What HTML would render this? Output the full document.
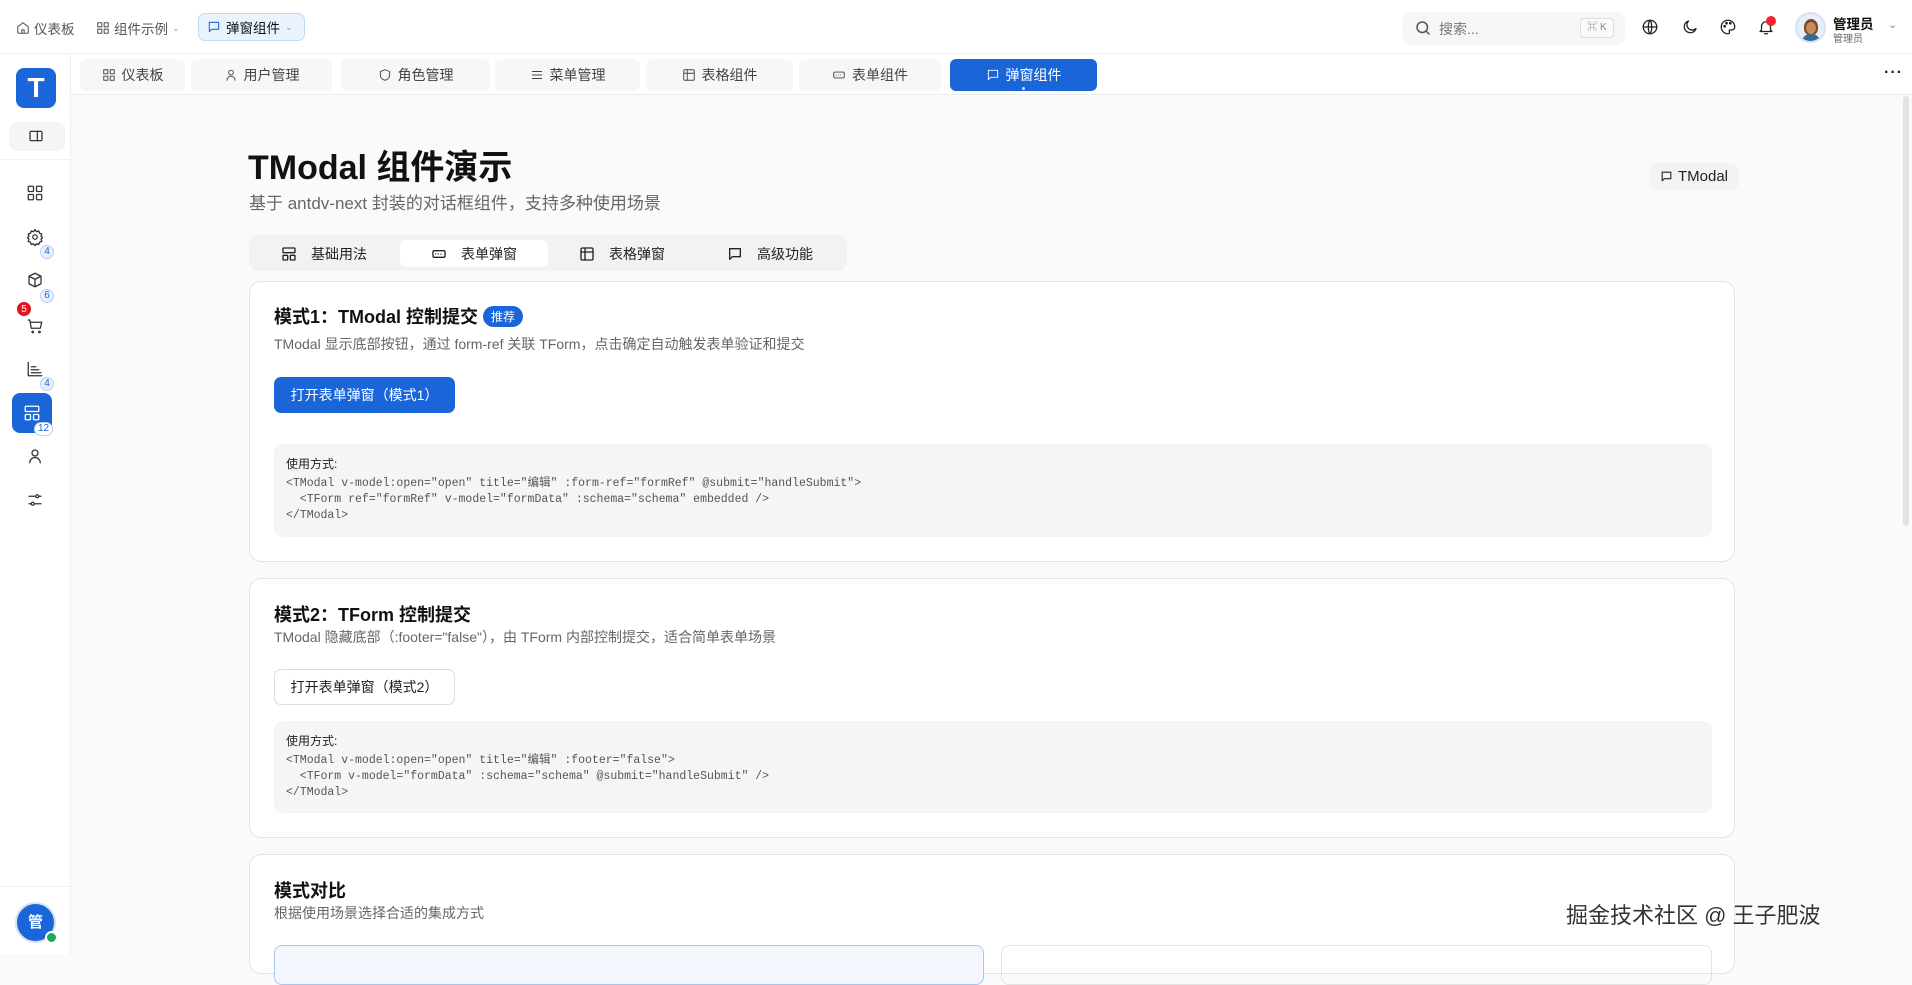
<!DOCTYPE html>
<html><head><meta charset="utf-8"><style>
*{box-sizing:border-box;margin:0;padding:0}
body{width:1912px;height:954px;overflow:hidden;background:#fafafa;font-family:"Liberation Sans","Noto Sans CJK SC",sans-serif;color:#1f1f1f;position:relative}
.a{position:absolute}
svg{fill:none;stroke:currentColor;stroke-width:2;stroke-linecap:round;stroke-linejoin:round}
.hdr{left:0;top:0;width:1912px;height:54px;background:#fff;border-bottom:1px solid #eee}
.side{left:0;top:54px;width:71px;height:900px;background:#fff;border-right:1px solid #eee}
.tabs{left:71px;top:54px;width:1841px;height:41px;background:#fff;border-bottom:1px solid #eee}
.tab{position:absolute;top:59px;height:32px;background:#f7f7f7;border-radius:6px;font-size:14px;color:#444;display:flex;align-items:center;justify-content:center;gap:6px}
.tab svg{width:14px;height:14px;stroke-width:1.6}
.card{position:absolute;left:249px;width:1486px;background:#fff;border:1px solid #e3e3e3;border-radius:12px}
.ct{position:absolute;left:24px;font-size:18px;font-weight:bold;color:#111}
.cd{position:absolute;left:24px;font-size:14px;color:#666}
.code{position:absolute;left:24px;width:1438px;background:#f5f5f5;border-radius:8px;padding:12px 12px;font-size:11.5px;color:#555;font-family:"Liberation Mono","Noto Sans CJK SC",monospace;line-height:16px;white-space:pre}
.code b{font-family:"Liberation Sans","Noto Sans CJK SC",sans-serif;font-weight:normal;color:#222;font-size:12px;display:block;margin-bottom:4px}
.si{position:absolute;left:26px;width:18px;height:18px;color:#333}
.si svg{width:18px;height:18px;stroke-width:1.7}
.bd{position:absolute;left:40px;height:14px;min-width:14px;padding:0 3px;border-radius:7px;background:#e6f0ff;border:1px solid #b9d1f5;color:#1a66d9;font-size:10px;line-height:12px;text-align:center}
.hi{position:absolute;top:18px;width:18px;height:18px;color:#222}
.hi svg{width:18px;height:18px;stroke-width:1.7}
</style></head><body>
<div class="a hdr"></div>
<!-- breadcrumbs -->
<div class="a" style="left:16px;top:18px;font-size:13.5px;color:#555;display:flex;align-items:center;gap:4px"><svg width="14" height="14" viewBox="0 0 24 24" style="stroke-width:1.8"><path d="M3 10l9-7 9 7v10a1 1 0 0 1-1 1H4a1 1 0 0 1-1-1z"/><path d="M10 21v-6h4v6"/></svg>仪表板</div>
<div class="a" style="left:96px;top:18px;font-size:13.5px;color:#555;display:flex;align-items:center;gap:4px"><svg width="14" height="14" viewBox="0 0 24 24" style="stroke-width:1.8"><rect x="3" y="3" width="7" height="7"/><rect x="14" y="3" width="7" height="7"/><rect x="3" y="14" width="7" height="7"/><rect x="14" y="14" width="7" height="7"/></svg>组件示例 <span style="font-size:9px;color:#999">⌄</span></div>
<div class="a" style="left:198px;top:13px;width:107px;height:28px;background:#eaf2fd;border:1px solid #c4d9f5;border-radius:7px;font-size:13.5px;color:#111;display:flex;align-items:center;gap:5px;padding-left:8px"><svg width="14" height="14" viewBox="0 0 24 24" style="color:#1a66d9;stroke-width:1.8"><path d="M4 4h16v12H8l-4 4z"/></svg>弹窗组件 <span style="font-size:9px;color:#7aa">⌄</span></div>
<!-- search -->
<div class="a" style="left:1402px;top:12px;width:223px;height:33px;background:#f6f6f6;border-radius:10px"></div>
<svg class="a" style="left:1414px;top:19px;color:#555" width="18" height="18" viewBox="0 0 24 24"><circle cx="11" cy="11" r="7"/><path d="M20 20l-4-4"/></svg>
<div class="a" style="left:1439px;top:19px;font-size:14px;color:#777">搜索...</div>
<div class="a" style="left:1580px;top:18px;width:34px;height:20px;border:1px solid #ddd;border-radius:4px;background:#fafafa;font-size:10px;color:#888;text-align:center;line-height:18px">⌘ K</div>
<div class="hi" style="left:1641px"><svg viewBox="0 0 24 24"><circle cx="12" cy="12" r="9"/><path d="M3 12h18M12 3c3 3 3 15 0 18M12 3c-3 3-3 15 0 18"/></svg></div>
<div class="hi" style="left:1681px"><svg viewBox="0 0 24 24"><path d="M20 14A8 8 0 1 1 10 4a6 6 0 0 0 10 10z"/></svg></div>
<div class="hi" style="left:1719px"><svg viewBox="0 0 24 24"><path d="M12 3a9 9 0 0 0 0 18c1.5 0 2-1 2-2s-1-2 0-3h3a4 4 0 0 0 4-4c0-5-4-9-9-9z"/><circle cx="7.5" cy="11" r="1"/><circle cx="10" cy="7" r="1"/><circle cx="15" cy="7" r="1"/></svg></div>
<div class="hi" style="left:1757px"><svg viewBox="0 0 24 24"><path d="M6 16V11a6 6 0 0 1 12 0v5l2 2H4z"/><path d="M10 21h4"/></svg></div>
<div class="a" style="left:1766px;top:16px;width:10px;height:10px;border-radius:50%;background:#f5222d"></div>
<div class="a" style="left:1795px;top:12px;width:31px;height:31px;border-radius:50%;background:#e8eef8;border:2px solid #d6e2f5;overflow:hidden"><div style="position:absolute;left:7px;top:5px;width:14px;height:16px;border-radius:50% 50% 40% 40%;background:#7a4a2a"></div><div style="position:absolute;left:9px;top:8px;width:10px;height:12px;border-radius:50%;background:#c98a5e"></div><div style="position:absolute;left:5px;top:20px;width:18px;height:10px;border-radius:8px 8px 0 0;background:#3b6a8f"></div></div>
<div class="a" style="left:1833px;top:13px;font-size:13.5px;font-weight:bold;color:#111">管理员</div>
<div class="a" style="left:1833px;top:30px;font-size:10px;color:#666">管理员</div>
<div class="a" style="left:1888px;top:18px;font-size:11px;color:#888">⌄</div>

<!-- sidebar -->
<div class="a side"></div>
<div class="a" style="left:16px;top:68px;width:40px;height:40px;border-radius:8px;background:#1a66d9;color:#fff;font-size:28px;font-weight:bold;text-align:center;line-height:40px">T</div>
<div class="a" style="left:9px;top:122px;width:56px;height:29px;background:#f5f5f5;border-radius:8px"></div>
<svg class="a" style="left:28px;top:128px;color:#222;stroke-width:1.7" width="16" height="16" viewBox="0 0 24 24"><rect x="3" y="5" width="18" height="14" rx="2"/><path d="M14 5v14"/></svg>
<div class="a" style="left:0;top:159px;width:71px;height:1px;background:#f0f0f0"></div>
<div class="si" style="top:184px"><svg viewBox="0 0 24 24"><rect x="3" y="3" width="7" height="7" rx="1"/><rect x="14" y="3" width="7" height="7" rx="1"/><rect x="3" y="14" width="7" height="7" rx="1"/><rect x="14" y="14" width="7" height="7" rx="1"/></svg></div>
<div class="si" style="top:228px"><svg viewBox="0 0 24 24"><circle cx="12" cy="12" r="3"/><path d="M12 2l2 3 3-1 1 3 3 1-1 3 2 2-2 2 1 3-3 1-1 3-3-1-2 3-2-3-3 1-1-3-3-1 1-3-2-2 2-2-1-3 3-1 1-3 3 1z"/></svg></div>
<div class="bd" style="top:245px">4</div>
<div class="si" style="top:271px"><svg viewBox="0 0 24 24"><path d="M12 3l8 4v10l-8 4-8-4V7z"/><path d="M4 7l8 4 8-4M12 11v10"/></svg></div>
<div class="bd" style="top:289px">6</div>
<div class="si" style="top:317px"><svg viewBox="0 0 24 24"><path d="M3 4h2l2 11h12l2-8H6"/><circle cx="9" cy="20" r="1"/><circle cx="18" cy="20" r="1"/></svg></div>
<div class="a" style="left:16px;top:301px;width:16px;height:16px;border-radius:50%;background:#e0141e;color:#fff;font-size:10px;text-align:center;line-height:16px;border:1px solid #fff">5</div>
<div class="si" style="top:360px"><svg viewBox="0 0 24 24"><path d="M3 3v18h18"/><path d="M7 9h6M7 13h10M7 17h13"/></svg></div>
<div class="bd" style="top:377px">4</div>
<div class="a" style="left:12px;top:393px;width:40px;height:40px;border-radius:8px;background:#1a66d9"></div>
<div class="si" style="top:404px;left:23px;color:#fff"><svg viewBox="0 0 24 24"><rect x="3" y="3" width="18" height="7" rx="1"/><rect x="3" y="14" width="7" height="7" rx="1"/><rect x="14" y="14" width="7" height="7" rx="1"/></svg></div>
<div class="bd" style="top:422px;left:34px;background:#fff">12</div>
<div class="si" style="top:447px"><svg viewBox="0 0 24 24"><circle cx="12" cy="8" r="4"/><path d="M5 21a7 7 0 0 1 14 0"/></svg></div>
<div class="si" style="top:491px"><svg viewBox="0 0 24 24"><path d="M4 7h9M17 7h3M4 17h3M11 17h9"/><circle cx="15" cy="7" r="2"/><circle cx="9" cy="17" r="2"/></svg></div>
<div class="a" style="left:0;top:886px;width:71px;height:1px;background:#f0f0f0"></div>
<div class="a" style="left:15px;top:902px;width:41px;height:41px;border-radius:50%;background:#1a66d9;border:2px solid #d6e2f5;color:#fff;font-size:15px;text-align:center;line-height:37px;font-weight:bold">管</div>
<div class="a" style="left:45px;top:931px;width:13px;height:13px;border-radius:50%;background:#1aab5a;border:2px solid #fff"></div>

<!-- tabs bar -->
<div class="a tabs"></div>
<div class="tab" style="left:80px;width:105px"><svg viewBox="0 0 24 24"><rect x="3" y="3" width="7" height="7"/><rect x="14" y="3" width="7" height="7"/><rect x="3" y="14" width="7" height="7"/><rect x="14" y="14" width="7" height="7"/></svg>仪表板</div>
<div class="tab" style="left:191px;width:141px"><svg viewBox="0 0 24 24"><circle cx="12" cy="8" r="4"/><path d="M5 21a7 7 0 0 1 14 0"/></svg>用户管理</div>
<div class="tab" style="left:341px;width:149px"><svg viewBox="0 0 24 24"><path d="M12 3l8 3v6c0 5-4 8-8 9-4-1-8-4-8-9V6z"/></svg>角色管理</div>
<div class="tab" style="left:495px;width:145px"><svg viewBox="0 0 24 24"><path d="M4 6h16M4 12h16M4 18h16"/></svg>菜单管理</div>
<div class="tab" style="left:646px;width:147px"><svg viewBox="0 0 24 24"><rect x="3" y="3" width="18" height="18" rx="2"/><path d="M3 9h18M9 3v18"/></svg>表格组件</div>
<div class="tab" style="left:799px;width:142px"><svg viewBox="0 0 24 24"><rect x="3" y="7" width="18" height="10" rx="2"/><path d="M7 12h.01M11 12h.01M15 12h.01"/></svg>表单组件</div>
<div class="tab" style="left:950px;width:147px;background:#1a66d9;color:#fff"><svg viewBox="0 0 24 24"><path d="M4 4h16v12H8l-4 4z"/></svg>弹窗组件</div>
<div class="a" style="left:1022px;top:87px;width:3px;height:3px;border-radius:50%;background:#cfe0fb"></div>
<div class="a" style="left:1884px;top:64px;font-size:16px;color:#222;font-weight:bold;letter-spacing:1px">···</div>
<div class="a" style="left:1903px;top:96px;width:6px;height:430px;border-radius:3px;background:#e3e3e3"></div>

<!-- content -->
<div class="a" style="left:248px;top:140px;font-size:34px;font-weight:bold;color:#111">TModal 组件演示</div>
<div class="a" style="left:249px;top:189px;font-size:17px;color:#666">基于 antdv-next 封装的对话框组件，支持多种使用场景</div>
<div class="a" style="left:1649px;top:163px;width:90px;height:27px;border-radius:8px;background:#f3f3f3;font-size:15px;color:#222;display:flex;align-items:center;justify-content:center;gap:5px"><svg width="13" height="13" viewBox="0 0 24 24" style="stroke-width:2"><path d="M4 4h16v12H8l-4 4z"/></svg>TModal</div>

<div class="a" style="left:249px;top:235px;width:598px;height:36px;background:#f2f2f2;border-radius:10px"></div>
<div class="a" style="left:400px;top:240px;width:148px;height:27px;background:#fff;border-radius:7px"></div>
<div class="a" style="left:281px;top:244px;font-size:14px;color:#222;display:flex;gap:14px;align-items:center"><svg width="16" height="16" viewBox="0 0 24 24"><rect x="3" y="3" width="18" height="7" rx="1"/><rect x="3" y="14" width="7" height="7" rx="1"/><rect x="14" y="14" width="7" height="7" rx="1"/></svg>基础用法</div>
<div class="a" style="left:431px;top:244px;font-size:14px;color:#222;display:flex;gap:14px;align-items:center"><svg width="16" height="16" viewBox="0 0 24 24"><rect x="3" y="7" width="18" height="10" rx="2"/><path d="M7 12h.01M11 12h.01M15 12h.01"/></svg>表单弹窗</div>
<div class="a" style="left:579px;top:244px;font-size:14px;color:#222;display:flex;gap:14px;align-items:center"><svg width="16" height="16" viewBox="0 0 24 24"><rect x="3" y="3" width="18" height="18" rx="2"/><path d="M3 9h18M9 3v18"/></svg>表格弹窗</div>
<div class="a" style="left:727px;top:244px;font-size:14px;color:#222;display:flex;gap:14px;align-items:center"><svg width="16" height="16" viewBox="0 0 24 24"><path d="M4 4h16v12H8l-4 4z"/></svg>高级功能</div>

<div class="card" style="top:281px;height:281px">
 <div class="ct" style="top:21px">模式1：TModal 控制提交 <span style="display:inline-block;vertical-align:2px;background:#1a66d9;color:#fff;font-size:12px;font-weight:normal;border-radius:11px;padding:2px 8px">推荐</span></div>
 <div class="cd" style="top:52px">TModal 显示底部按钮，通过 form-ref 关联 TForm，点击确定自动触发表单验证和提交</div>
 <div class="a" style="left:24px;top:95px;width:181px;height:36px;border-radius:7px;background:#1a66d9;color:#fff;font-size:14px;text-align:center;line-height:36px">打开表单弹窗（模式1）</div>
 <div class="code" style="top:162px;height:93px"><b>使用方式:</b>&lt;TModal v-model:open="open" title="编辑" :form-ref="formRef" @submit="handleSubmit"&gt;
  &lt;TForm ref="formRef" v-model="formData" :schema="schema" embedded /&gt;
&lt;/TModal&gt;</div>
</div>

<div class="card" style="top:578px;height:260px">
 <div class="ct" style="top:22px">模式2：TForm 控制提交</div>
 <div class="cd" style="top:48px">TModal 隐藏底部（:footer="false"），由 TForm 内部控制提交，适合简单表单场景</div>
 <div class="a" style="left:24px;top:90px;width:181px;height:36px;border-radius:7px;background:#fff;border:1px solid #ddd;color:#222;font-size:14px;text-align:center;line-height:34px">打开表单弹窗（模式2）</div>
 <div class="code" style="top:142px;height:92px"><b>使用方式:</b>&lt;TModal v-model:open="open" title="编辑" :footer="false"&gt;
  &lt;TForm v-model="formData" :schema="schema" @submit="handleSubmit" /&gt;
&lt;/TModal&gt;</div>
</div>

<div class="card" style="top:854px;height:120px">
 <div class="ct" style="top:22px">模式对比</div>
 <div class="cd" style="top:48px">根据使用场景选择合适的集成方式</div>
 <div class="a" style="left:24px;top:90px;width:710px;height:40px;border:1px solid #a9c5ec;border-radius:8px;background:#f4f8fe"></div>
 <div class="a" style="left:751px;top:90px;width:711px;height:40px;border:1px solid #e3e3e3;border-radius:8px"></div>
</div>

<div class="a" style="left:1566px;top:898px;font-size:22px;color:#333;text-shadow:1px 1px 0 #fff,-1px -1px 0 #fff">掘金技术社区 @ 王子肥波</div>
</body></html>
